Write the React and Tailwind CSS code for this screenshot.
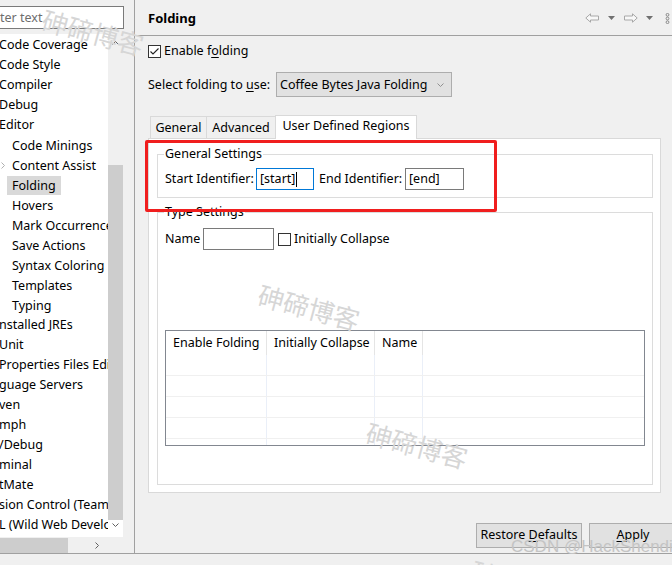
import React from "react";

const tree = [
  { t: "Code Coverage", l: 0 },
  { t: "Code Style", l: 0 },
  { t: "Compiler", l: 0 },
  { t: "Debug", l: 0 },
  { t: "Editor", l: 0 },
  { t: "Code Minings", l: 1 },
  { t: "Content Assist", l: 1, arrow: true },
  { t: "Folding", l: 1, sel: true },
  { t: "Hovers", l: 1 },
  { t: "Mark Occurrences", l: 1 },
  { t: "Save Actions", l: 1 },
  { t: "Syntax Coloring", l: 1 },
  { t: "Templates", l: 1 },
  { t: "Typing", l: 1 },
  { t: "nstalled JREs", l: 0 },
  { t: "Unit", l: 0 },
  { t: "Properties Files Editor", l: 0 },
  { t: "guage Servers", l: 0 },
  { t: "ven", l: 0 },
  { t: "mph", l: 0 },
  { t: "/Debug", l: 0 },
  { t: "minal", l: 0 },
  { t: "tMate", l: 0 },
  { t: "sion Control (Team)", l: 0 },
  { t: "L (Wild Web Developer)", l: 0 },
];

function ChevUp() {
  return (
    <svg width="7" height="4" viewBox="0 0 7 4">
      <path d="M0.5 3.5 L3.5 0.5 L6.5 3.5" stroke="#606060" fill="none" />
    </svg>
  );
}
function ChevDown({ color = "#606060" }) {
  return (
    <svg width="7" height="4" viewBox="0 0 7 4">
      <path d="M0.5 0.5 L3.5 3.5 L6.5 0.5" stroke={color} fill="none" />
    </svg>
  );
}
function ChevRight({ color = "#606060" }) {
  return (
    <svg width="4" height="7" viewBox="0 0 4 7">
      <path d="M0.5 0.5 L3.5 3.5 L0.5 6.5" stroke={color} fill="none" />
    </svg>
  );
}

function Check({ checked }) {
  return (
    <div className="w-[13px] h-[13px] border border-[#333333] bg-white flex items-center justify-center shrink-0">
      {checked && (
        <svg width="11" height="11" viewBox="0 0 11 11">
          <path d="M1.5 5.5 L4 8 L9.5 2.5" stroke="#222" strokeWidth="1.1" fill="none" />
        </svg>
      )}
    </div>
  );
}

function LeftPanel() {
  return (
    <div className="w-[135px] border-r border-[#a0a0a0] flex flex-col pt-[6px] shrink-0">
      <div className="w-[124px] h-[23px] border border-l-0 border-[#7a7a7a] bg-white flex items-center text-[#6d6d6d] leading-none pt-[1px]">
        <span>ter text</span>
      </div>
      <div className="mt-[5px] flex flex-col">
        <div className="flex h-[503px]">
          <div className="w-[108px] bg-white overflow-hidden">
            {tree.map((it, i) => (
              <div key={i} className="h-[20px] pt-[2px] flex items-center whitespace-nowrap">
                {it.l === 0 ? (
                  <span className="leading-[18px] ml-[-1px]">{it.t}</span>
                ) : (
                  <>
                    <div className="w-[7px] flex items-center shrink-0">
                      {it.arrow && (
                        <div className="ml-[1px]">
                          <ChevRight color="#b0b0b0" />
                        </div>
                      )}
                    </div>
                    <span className={"px-[5px] leading-[19px] " + (it.sel ? "bg-[#d9d9d9]" : "")}>
                      {it.t}
                    </span>
                  </>
                )}
              </div>
            ))}
          </div>
          <div className="w-[15px] bg-[#f0f0f0] flex flex-col">
            <div className="h-[17px] flex items-center justify-center">
              <ChevUp />
            </div>
            <div className="h-[114px]" />
            <div className="h-[355px] bg-[#cdcdcd]" />
            <div className="h-[17px] flex items-start justify-center pt-[3px] bg-white">
              <ChevDown />
            </div>
          </div>
        </div>
        <div className="flex h-[16px]">
          <div className="w-[108px] flex items-center bg-[#f0f0f0]">
            <div className="w-[68px] h-[15px] mt-[1px] bg-[#cdcdcd]" />
            <div className="flex-1" />
            <div className="mr-[9px] mt-[1px]">
              <ChevRight />
            </div>
          </div>
          <div className="w-[15px] bg-[#f0f0f0]" />
        </div>
      </div>
    </div>
  );
}

function NavIcons() {
  return (
    <div className="flex items-center mr-[2px] mt-[1px]">
      <svg width="15" height="10" viewBox="0 0 15 10">
        <path d="M0.8 5 L5.5 0.8 V3 H13.5 V7 H5.5 V9.2 Z" stroke="#a8a8a8" fill="#f8f8f8" strokeWidth="1" />
      </svg>
      <svg width="7" height="4" viewBox="0 0 7 4" className="ml-[8px]">
        <path d="M0 0 H7 L3.5 4 Z" fill="#707070" />
      </svg>
      <svg width="15" height="10" viewBox="0 0 15 10" className="ml-[8px]">
        <path d="M14.2 5 L9.5 0.8 V3 H1.5 V7 H9.5 V9.2 Z" stroke="#a8a8a8" fill="#f8f8f8" strokeWidth="1" />
      </svg>
      <svg width="7" height="4" viewBox="0 0 7 4" className="ml-[8px]">
        <path d="M0 0 H7 L3.5 4 Z" fill="#707070" />
      </svg>
      <svg width="5" height="11" viewBox="0 0 5 11" className="ml-[12px]">
        <circle cx="2.5" cy="1.8" r="1.4" stroke="#808080" fill="none" strokeWidth="0.9" />
        <circle cx="2.5" cy="5.5" r="1.4" stroke="#808080" fill="none" strokeWidth="0.9" />
        <circle cx="2.5" cy="9.2" r="1.4" stroke="#808080" fill="none" strokeWidth="0.9" />
      </svg>
    </div>
  );
}

function RightPanel() {
  const cols = ["w-[101px]", "w-[108px]", "w-[48px]", "flex-1"];
  const heads = ["Enable Folding", "Initially Collapse", "Name", ""];
  return (
    <div className="flex-1 flex flex-col overflow-hidden">
      <div className="h-[36px] border-b border-[#a0a0a0] flex items-center justify-between pl-[13px]">
        <span className="font-bold text-[13px] mt-[2px]">Folding</span>
        <NavIcons />
      </div>
      <div className="pl-[13px] pr-[11px] flex flex-col">
        <div className="mt-[7px] h-[16px] flex items-center">
          <Check checked />
          <span className="ml-[3px]">
            Enable f<span className="underline underline-offset-2">o</span>lding
          </span>
        </div>
        <div className="mt-[13px] h-[25px] flex items-center">
          <span className="w-[128px] whitespace-nowrap pt-[1px]">
            Select folding to <span className="underline underline-offset-2">u</span>se:
          </span>
          <div className="w-[176px] h-[25px] border border-[#adadad] bg-[#e1e1e1] flex items-center justify-between pl-[3px] pr-[7px]">
            <span className="whitespace-nowrap pt-[1px]">Coffee Bytes Java Folding</span>
            <ChevDown color="#909090" />
          </div>
        </div>
        <div className="mt-[18px] flex items-end pl-[2px]">
          <div className="w-[57px] h-[22px] border border-b-0 border-[#d9d9d9] flex items-center justify-center bg-[#f0f0f0] pt-[1px]">
            <span>General</span>
          </div>
          <div className="w-[70px] h-[22px] -ml-px border border-b-0 border-[#d9d9d9] flex items-center justify-center bg-[#f0f0f0] pt-[1px]">
            <span>Advanced</span>
          </div>
          <div className="w-[142px] h-[24px] -mb-px -ml-px relative z-10 border border-b-0 border-[#d9d9d9] bg-white flex items-center justify-center pb-[2px]">
            <span className="whitespace-nowrap">User Defined Regions</span>
          </div>
        </div>
        <div className="h-[355px] bg-white border border-[#d9d9d9] pl-[8px] pr-[7px] pb-[7px] flex flex-col">
          <fieldset className="mt-[7px] border border-[#dcdcdc] px-[7px] pb-[7px]">
            <legend className="px-[1px] leading-[16px] ml-[-1px]">General Settings</legend>
            <div className="mt-[6px] h-[22px] flex items-center whitespace-nowrap">
              <span className="w-[91px]">Start Identifier:</span>
              <div className="w-[58px] h-[22px] border border-[#0078d7] flex items-center pl-[3px]">
                <span>[start]</span>
                <span className="w-px h-[15px] bg-black ml-[1px]" />
              </div>
              <span className="ml-[5px] w-[86px]">End Identifier:</span>
              <div className="w-[59px] h-[22px] border border-[#7a7a7a] flex items-center pl-[3px]">
                <span>[end]</span>
              </div>
            </div>
          </fieldset>
          <fieldset className="mt-[6px] flex-1 border border-[#dcdcdc] px-[7px]">
            <legend className="px-[1px] leading-[16px] ml-[-1px]">Type Settings</legend>
            <div className="mt-[8px] h-[22px] flex items-center whitespace-nowrap">
              <span className="w-[38px]">Name</span>
              <div className="w-[71px] h-[22px] border border-[#7a7a7a] bg-white" />
              <div className="ml-[4px]">
                <Check />
              </div>
              <span className="ml-[3px]">Initially Collapse</span>
            </div>
            <div className="mt-[80px] h-[116px] border border-[#828790] overflow-hidden flex flex-col">
              <div className="h-[24px] flex shrink-0">
                {heads.map((h, i) => (
                  <div
                    key={i}
                    className={cols[i] + " h-full flex items-center pl-[7px] whitespace-nowrap " + (i < 3 ? "border-r border-[#e5e5e5]" : "")}
                  >
                    {h}
                  </div>
                ))}
              </div>
              {[0, 1, 2, 3, 4].map((r) => (
                <div key={r} className="h-[21px] flex shrink-0 border-b border-[#f0f0f0]">
                  {cols.map((c, i) => (
                    <div key={i} className={c + " h-full " + (i < 3 ? "border-r border-[#eaeff8]" : "")} />
                  ))}
                </div>
              ))}
            </div>
          </fieldset>
        </div>
      </div>
      <div className="mt-[30px] flex gap-[7px] pl-[341px]">
        <div className="w-[106px] h-[25px] shrink-0 border border-[#adadad] bg-[#e1e1e1] flex items-center justify-center whitespace-nowrap">
          <span>
            Restore <span className="underline underline-offset-2">D</span>efaults
          </span>
        </div>
        <div className="w-[88px] h-[25px] shrink-0 border border-[#adadad] bg-[#e1e1e1] flex items-center justify-center">
          <span>
            <span className="underline underline-offset-2">A</span>pply
          </span>
        </div>
      </div>
    </div>
  );
}

function Watermark({ className }) {
  return (
    <div
      className={
        "absolute pointer-events-none whitespace-nowrap text-[26px] leading-[30px] text-[#d6d6d6] rotate-[15deg] font-['Noto_Sans_CJK_SC',sans-serif] " +
        className
      }
    >
      砷碲博客
    </div>
  );
}

export default function App() {
  return (
    <div className="relative w-[672px] h-[565px] overflow-hidden bg-[#f0f0f0] text-[12.5px] text-black font-['Noto_Sans','Noto_Sans_CJK_SC',sans-serif]">
      <div className="flex h-[553px]">
        <LeftPanel />
        <RightPanel />
      </div>
      <div className="h-px bg-[#a0a0a0]" />
      <Watermark className="left-[41px] top-[17px]" />
      <Watermark className="left-[257px] top-[292px]" />
      <Watermark className="left-[365px] top-[430px]" />
      <Watermark className="left-[470px] top-[568px]" />
      <div className="absolute pointer-events-none left-[145px] top-[140px] w-[352px] h-[72px] border-[3px] border-[#f01e1e] rounded-[2px]" />
      <div className="absolute pointer-events-none left-[511px] top-[537px] text-[17px] leading-[20px] text-[#c4c4c4] font-['Liberation_Sans',sans-serif] whitespace-nowrap">
        CSDN @HackShendi
      </div>
    </div>
  );
}
